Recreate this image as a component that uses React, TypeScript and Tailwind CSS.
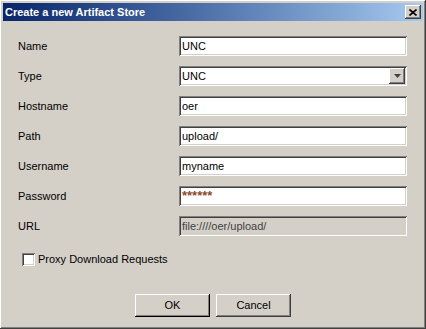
import React, { useState } from "react";

const raised =
  "shadow-[inset_-1px_-1px_#404040,inset_1px_1px_#ffffff,inset_-2px_-2px_#808080,inset_2px_2px_#d4d0c8]";
const sunken =
  "shadow-[inset_1px_1px_#808080,inset_-1px_-1px_#ffffff,inset_2px_2px_#404040,inset_-2px_-2px_#d4d0c8]";

function Field({ value, disabled, tone = "" }: { value: string; disabled?: boolean; tone?: string }) {
  return (
    <div
      className={`w-[228px] h-[20px] flex items-center pl-[3px] ${sunken} ${
        disabled ? "bg-[#d4d0c8] text-[#404040]" : "bg-white"
      } ${tone || (disabled ? "" : "text-black")}`}
    >
      {value}
    </div>
  );
}

export default function App() {
  const [proxy, setProxy] = useState(false);

  const rows: { label: string; el: React.ReactNode }[] = [
    { label: "Name", el: <Field value="UNC" /> },
    {
      label: "Type",
      el: (
        <div className={`w-[228px] h-[20px] flex items-center pl-[3px] pr-[2px] bg-white ${sunken}`}>
          <span className="flex-1">UNC</span>
          <div className={`w-[16px] h-[16px] bg-[#d4d0c8] flex items-center justify-center ${raised}`}>
            <svg width="7" height="4" viewBox="0 0 7 4">
              <path d="M0 0h7L3.5 4z" fill="#404040" />
            </svg>
          </div>
        </div>
      ),
    },
    { label: "Hostname", el: <Field value="oer" /> },
    { label: "Path", el: <Field value="upload/" /> },
    { label: "Username", el: <Field value="myname" /> },
    { label: "Password", el: <Field value="******" tone="text-[#8b4a2b] font-bold text-[13px]" /> },
    { label: "URL", el: <Field value="file:////oer/upload/" disabled /> },
  ];

  return (
    <div
      className={`w-[426px] h-[329px] bg-[#d4d0c8] p-[3px] flex flex-col text-[11px] text-black ${raised}`}
      style={{ fontFamily: '"Liberation Sans", Arial, sans-serif' }}
    >
      <div className="h-[18px] bg-gradient-to-r from-[#0a246a] to-[#a6caf0] flex items-center pl-[2px] pr-[2px]">
        <span className="flex-1 text-white font-bold text-[11px]">Create a new Artifact Store</span>
        <div className={`w-[16px] h-[14px] bg-[#d4d0c8] flex items-center justify-center ${raised}`}>
          <svg width="8" height="7" viewBox="0 0 8 7">
            <path d="M0.5 0.5l7 6M7.5 0.5l-7 6" stroke="#000" strokeWidth="1.6" />
          </svg>
        </div>
      </div>

      <div className="flex flex-col gap-[10px] pt-[15px] pl-[15px]">
        {rows.map((r) => (
          <div key={r.label} className="flex items-center">
            <span className="w-[161px]">{r.label}</span>
            {r.el}
          </div>
        ))}
      </div>

      <label className="flex items-center mt-[15px] ml-[19px] gap-[3px] cursor-default">
        <span
          onClick={() => setProxy(!proxy)}
          className={`w-[13px] h-[13px] bg-white flex items-center justify-center ${sunken}`}
        >
          {proxy && (
            <svg width="7" height="7" viewBox="0 0 7 7">
              <path d="M0 3l2 2 5-5v2l-5 5-2-2z" fill="#000" />
            </svg>
          )}
        </span>
        <span>Proxy Download Requests</span>
      </label>

      <div className="flex justify-center gap-[6px] mt-[26px]">
        <button className="w-[75px] h-[23px] bg-[#d4d0c8] shadow-[inset_-1px_-1px_#000,inset_1px_1px_#ffffff,inset_-2px_-2px_#808080,inset_2px_2px_#d4d0c8]">
          OK
        </button>
        <button className={`w-[75px] h-[23px] bg-[#d4d0c8] ${raised}`}>Cancel</button>
      </div>
    </div>
  );
}
